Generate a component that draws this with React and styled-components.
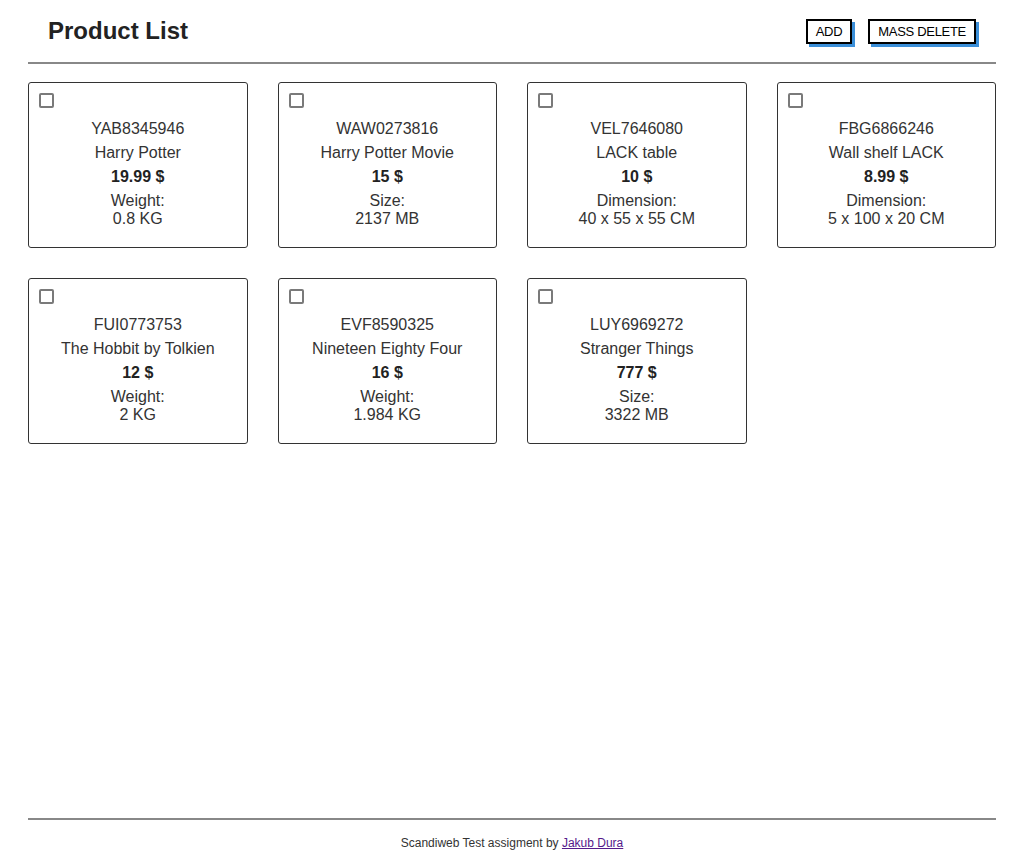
import React from "react";
import styled, { createGlobalStyle } from "styled-components";

const GlobalStyle = createGlobalStyle`
  html, body {
    margin: 0;
    padding: 0;
    background: #ffffff;
  }
  body {
    font-family: "Liberation Sans", Arial, sans-serif;
    color: #333333;
  }
`;

const Page = styled.div`
  width: 968px;
  margin-left: 28px;
  min-height: 854px;
  display: flex;
  flex-direction: column;
`;

const Header = styled.header`
  height: 62px;
  padding: 0 20px;
  display: flex;
  align-items: center;
  justify-content: space-between;
  border-bottom: 2px solid #888888;
`;

const Title = styled.h1`
  margin: 0;
  font-size: 24px;
  font-weight: bold;
  color: #222222;
`;

const Actions = styled.div`
  display: flex;
  gap: 16px;
`;

const ActionButton = styled.button`
  height: 25px;
  padding: 0 8px;
  border: 2px solid #000000;
  background: #ffffff;
  box-shadow: 3px 3px 0 #3b8fd9;
  font-family: "Liberation Sans", Arial, sans-serif;
  font-size: 13px;
  letter-spacing: -0.3px;
  color: #000000;
  cursor: pointer;
`;

const Grid = styled.main`
  margin-top: 18px;
  display: grid;
  grid-template-columns: repeat(4, 1fr);
  column-gap: 30px;
  row-gap: 30px;
  align-content: start;
`;

const Card = styled.div`
  border: 1px solid #333333;
  border-radius: 3px;
  padding: 10px 10px 19px 10px;
  display: flex;
  flex-direction: column;
`;

const Check = styled.input.attrs({ type: "checkbox" })`
  appearance: none;
  -webkit-appearance: none;
  box-sizing: border-box;
  width: 15px;
  height: 15px;
  margin: 0;
  border: 2px solid #7a7a7a;
  border-radius: 2px;
  background: #ffffff;
  align-self: flex-start;
  cursor: pointer;
  &:checked {
    background: #0075ff;
    border-color: #0075ff;
  }
`;

const Info = styled.div`
  margin-top: 12px;
  display: flex;
  flex-direction: column;
  align-items: center;
  gap: 6px;
  text-align: center;
  font-size: 16px;
  line-height: 18px;
  color: #333333;
`;

const Line = styled.div`
  font-weight: ${(p) => (p.$bold ? "bold" : "normal")};
  color: ${(p) => (p.$bold ? "#222222" : "#333333")};
`;

const Footer = styled.footer`
  margin-top: auto;
  border-top: 2px solid #888888;
  padding: 16px 0 4px;
  text-align: center;
  font-size: 12px;
  line-height: 14px;
  color: #333333;
`;

const Link = styled.a`
  color: #551a8b;
  text-decoration: underline;
`;

const products = [
  { sku: "YAB8345946", name: "Harry Potter", price: "19.99 $", label: "Weight:", value: "0.8 KG" },
  { sku: "WAW0273816", name: "Harry Potter Movie", price: "15 $", label: "Size:", value: "2137 MB" },
  { sku: "VEL7646080", name: "LACK table", price: "10 $", label: "Dimension:", value: "40 x 55 x 55 CM" },
  { sku: "FBG6866246", name: "Wall shelf LACK", price: "8.99 $", label: "Dimension:", value: "5 x 100 x 20 CM" },
  { sku: "FUI0773753", name: "The Hobbit by Tolkien", price: "12 $", label: "Weight:", value: "2 KG" },
  { sku: "EVF8590325", name: "Nineteen Eighty Four", price: "16 $", label: "Weight:", value: "1.984 KG" },
  { sku: "LUY6969272", name: "Stranger Things", price: "777 $", label: "Size:", value: "3322 MB" },
];

export default function App() {
  return (
    <>
      <GlobalStyle />
      <Page>
        <Header>
          <Title>Product List</Title>
          <Actions>
            <ActionButton>ADD</ActionButton>
            <ActionButton>MASS DELETE</ActionButton>
          </Actions>
        </Header>
        <Grid>
          {products.map((p) => (
            <Card key={p.sku}>
              <Check />
              <Info>
                <Line>{p.sku}</Line>
                <Line>{p.name}</Line>
                <Line $bold>{p.price}</Line>
                <Line>
                  {p.label}
                  <br />
                  {p.value}
                </Line>
              </Info>
            </Card>
          ))}
        </Grid>
        <Footer>
          Scandiweb Test assigment by <Link href="#">Jakub Dura</Link>
        </Footer>
      </Page>
    </>
  );
}
